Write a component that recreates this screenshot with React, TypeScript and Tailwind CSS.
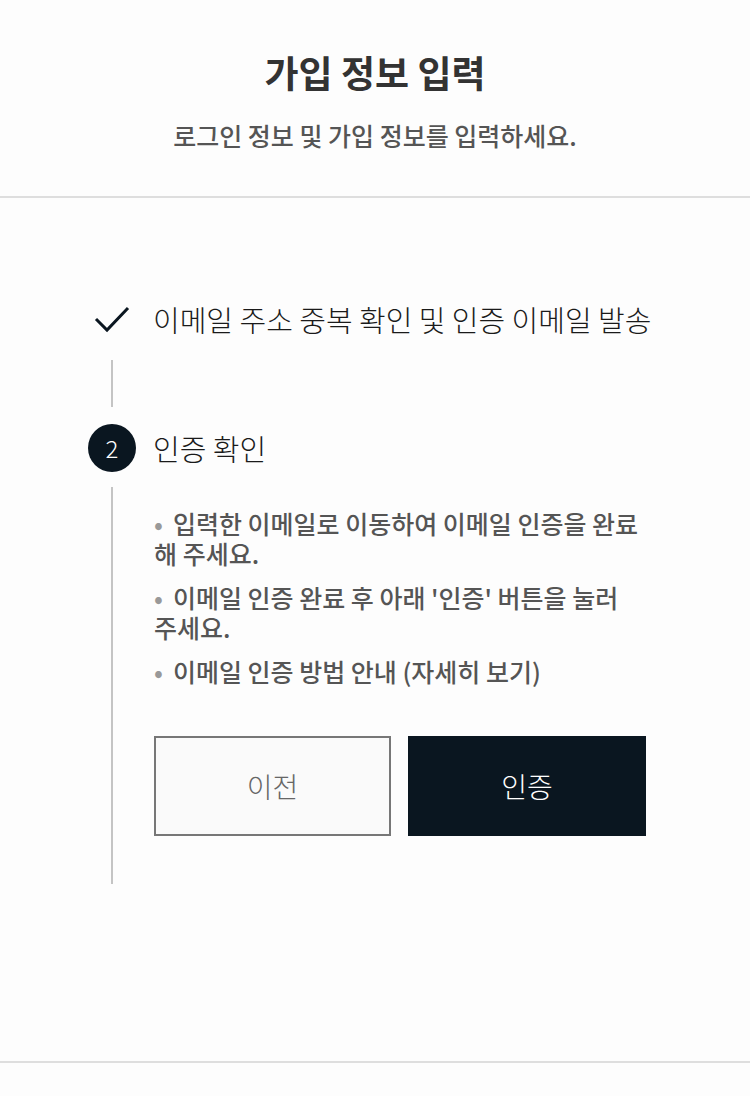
import React from 'react';

const font = { fontFamily: "'Noto Sans CJK KR', 'Noto Sans', sans-serif" };

const notes = [
  '입력한 이메일로 이동하여 이메일 인증을 완료 해 주세요.',
  "이메일 인증 완료 후 아래 '인증' 버튼을 눌러 주세요.",
  '이메일 인증 방법 안내 (자세히 보기)',
];

const App: React.FC = () => {
  return (
    <div className="min-h-[1096px] w-[750px] bg-[#fdfdfd] font-['Noto_Sans_CJK_KR','Noto_Sans',sans-serif]">
      <header className="flex flex-col items-center pt-[51px] pb-[46px] border-b-2 border-[#dedede]">
        <h1 className="text-[37px] leading-[42px] font-bold text-[#333]">가입 정보 입력</h1>
        <p className="mt-[28px] text-[25px] leading-[29px] font-medium text-[#555]">
          로그인 정보 및 가입 정보를 입력하세요.
        </p>
      </header>

      <section className="pl-[88px] pt-[101px] pb-[177px] border-b-2 border-[#dedede]">
        {/* step 1 - done */}
        <div className="flex items-center h-[40px]">
          <div className="w-12 flex justify-center">
            <svg width="36" height="28" viewBox="0 0 36 28" fill="none">
              <polyline points="2,14 13,25 34,3" stroke="#0a1620" strokeWidth="3" />
            </svg>
          </div>
          <span className="ml-[17px] text-[29px] leading-[40px] font-light text-[#1a1a1a]">
            이메일 주소 중복 확인 및 인증 이메일 발송
          </span>
        </div>

        <div className="w-12 flex justify-center pt-[21px] pb-[17px]">
          <div className="w-[2px] h-[47px] bg-[#c4c4c4]" />
        </div>

        {/* step 2 - current */}
        <div className="flex items-center h-12">
          <div className="w-12 h-12 rounded-full bg-[#0a1620] flex items-center justify-center text-white text-[24px] font-extralight">
            2
          </div>
          <span className="ml-[17px] text-[29px] leading-[40px] font-light text-[#1a1a1a]">인증 확인</span>
        </div>

        <div className="flex">
          <div className="w-12 flex justify-center pt-[15px]">
            <div className="w-[2px] h-[397px] bg-[#c4c4c4]" />
          </div>
          <div className="ml-[18px] w-[492px] pt-[36px]">
            <ul className="flex flex-col gap-[14px]">
              {notes.map((n) => (
                <li
                  key={n}
                  className="text-[25px] leading-[30px] font-medium text-[#555] break-keep before:content-['•'] before:text-[#999] before:mr-[10px]"
                >
                  {n}
                </li>
              ))}
            </ul>
            <div className="mt-[50px] flex gap-[17px]">
              <button
                style={font}
                className="w-[237px] h-[100px] border-2 border-[#777] bg-[#fafafa] text-[28px] font-light text-[#666]"
              >
                이전
              </button>
              <button
                style={font}
                className="w-[238px] h-[100px] bg-[#0a1620] text-[28px] font-light text-white"
              >
                인증
              </button>
            </div>
          </div>
        </div>
      </section>
    </div>
  );
};

export default App;
